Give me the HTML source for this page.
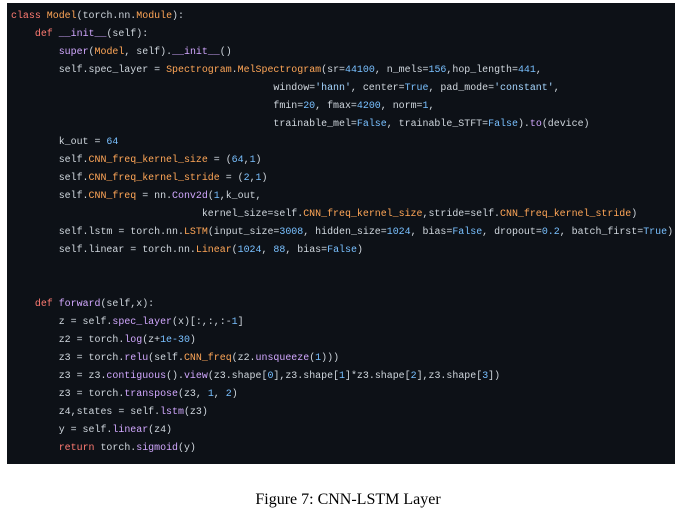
<!DOCTYPE html>
<html><head><meta charset="utf-8"><style>
body{margin:0;width:692px;height:513px;background:#fff;position:relative;overflow:hidden}
.box{position:absolute;left:7px;top:3px;width:668px;height:461px;background:#0d1117}
pre{position:absolute;left:11px;top:7px;margin:0;font-family:"Liberation Mono",monospace;font-size:9.95px;line-height:18px;color:#d0d7de;white-space:pre}
.k{color:#ff7b72}.f{color:#d2a8ff}.o{color:#ffa657}.n{color:#79c0ff}.s{color:#a5d6ff}
.cap{position:absolute;top:491px;left:2px;width:692px;text-align:center;font-family:"Liberation Serif",serif;font-size:16px;color:#000}
</style></head><body>
<div class="box"></div>
<pre><span class="k">class</span> <span class="o">Model</span>(torch.nn.<span class="o">Module</span>):
    <span class="k">def</span> <span class="f">__init__</span>(self):
        <span class="f">super</span>(<span class="o">Model</span>, self).<span class="f">__init__</span>()
        self.spec_layer = <span class="o">Spectrogram</span>.<span class="o">MelSpectrogram</span>(sr=<span class="n">44100</span>, n_mels=<span class="n">156</span>,hop_length=<span class="n">441</span>,
                                            window=<span class="s">'hann'</span>, center=<span class="n">True</span>, pad_mode=<span class="s">'constant'</span>,
                                            fmin=<span class="n">20</span>, fmax=<span class="n">4200</span>, norm=<span class="n">1</span>,
                                            trainable_mel=<span class="n">False</span>, trainable_STFT=<span class="n">False</span>).<span class="f">to</span>(device)
        k_out = <span class="n">64</span>
        self.<span class="o">CNN_freq_kernel_size</span> = (<span class="n">64</span>,<span class="n">1</span>)
        self.<span class="o">CNN_freq_kernel_stride</span> = (<span class="n">2</span>,<span class="n">1</span>)
        self.<span class="o">CNN_freq</span> = nn.<span class="f">Conv2d</span>(<span class="n">1</span>,k_out,
                                kernel_size=self.<span class="o">CNN_freq_kernel_size</span>,stride=self.<span class="o">CNN_freq_kernel_stride</span>)
        self.lstm = torch.nn.<span class="o">LSTM</span>(input_size=<span class="n">3008</span>, hidden_size=<span class="n">1024</span>, bias=<span class="n">False</span>, dropout=<span class="n">0.2</span>, batch_first=<span class="n">True</span>)
        self.linear = torch.nn.<span class="o">Linear</span>(<span class="n">1024</span>, <span class="n">88</span>, bias=<span class="n">False</span>)


    <span class="k">def</span> <span class="f">forward</span>(self,x):
        z = self.<span class="f">spec_layer</span>(x)[:,:,:-<span class="n">1</span>]
        z2 = torch.<span class="f">log</span>(z+<span class="n">1e-30</span>)
        z3 = torch.<span class="f">relu</span>(self.<span class="o">CNN_freq</span>(z2.<span class="f">unsqueeze</span>(<span class="n">1</span>)))
        z3 = z3.<span class="f">contiguous</span>().<span class="f">view</span>(z3.shape[<span class="n">0</span>],z3.shape[<span class="n">1</span>]*z3.shape[<span class="n">2</span>],z3.shape[<span class="n">3</span>])
        z3 = torch.<span class="f">transpose</span>(z3, <span class="n">1</span>, <span class="n">2</span>)
        z4,states = self.<span class="f">lstm</span>(z3)
        y = self.<span class="f">linear</span>(z4)
        <span class="k">return</span> torch.<span class="f">sigmoid</span>(y)</pre>
<div class="cap">Figure 7: CNN-LSTM Layer</div>
</body></html>
